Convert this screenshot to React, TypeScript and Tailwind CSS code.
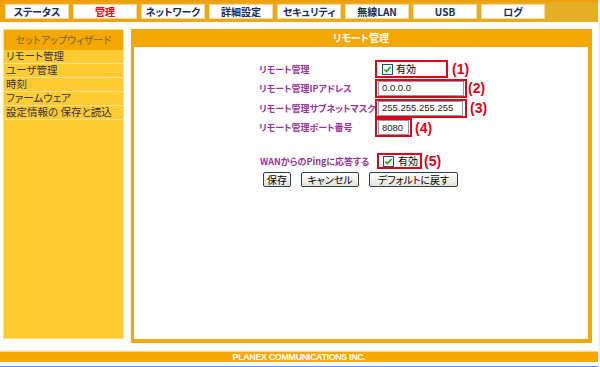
import React from "react";

const jp = {
  fontFamily: '"Noto Sans CJK JP", "Noto Sans", sans-serif',
  fontFeatureSettings: '"palt"',
} as React.CSSProperties;

const tabs = ["ステータス", "管理", "ネットワーク", "詳細設定", "セキュリティ", "無線LAN", "USB", "ログ"];
const side = ["リモート管理", "ユーザ管理", "時刻", "ファームウェア", "設定情報の 保存と読込"];

function Check() {
  return (
    <svg width="11" height="11" viewBox="0 0 11 11" className="shrink-0">
      <rect x="0.5" y="0.5" width="10" height="10" fill="#f4f4ee" stroke="#1c5180" />
      <path d="M2.5 5.5 L4.5 7.5 L8.5 3" fill="none" stroke="#21a121" strokeWidth="1.6" />
    </svg>
  );
}

function Num({ n, ml }: { n: number; ml: string }) {
  return (
    <span
      className={`${ml} text-[14px] font-bold text-[#e0001a] leading-none`}
      style={{ fontFamily: '"Liberation Sans", Arial, sans-serif' }}
    >
      ({n})
    </span>
  );
}

function Input({ w, v }: { w: string; v: string }) {
  return (
    <div
      className={`${w} h-[15px] border border-[#7f9db9] bg-white flex items-center px-[3px] text-[9.5px] text-[#222] leading-none`}
      style={{ fontFamily: '"Liberation Sans", Arial, sans-serif' }}
    >
      {v}
    </div>
  );
}

function Btn({ w, t }: { w: string; t: string }) {
  return (
    <div
      className={`${w} h-[15px] border border-[#2a3f5f] rounded-[2px] bg-gradient-to-b from-white to-[#e6e3d6] flex items-center justify-center text-[10px] text-black leading-none`}
      style={jp}
    >
      {t}
    </div>
  );
}

const lab = "text-[9px] font-bold text-[#993399] leading-none whitespace-nowrap";

export default function App() {
  return (
    <div className="w-[600px] h-[367px] bg-white overflow-hidden flex">
      <div className="w-[598px] flex flex-col">
        <div className="h-[22px] bg-gradient-to-r from-[#f0a30c] via-[#e8ab1c] to-[#e4af28] border-t-2 border-[#ee9f0a] pl-[5px] pt-[2px] flex gap-[4px]">
          {tabs.map((t, i) => (
            <div
              key={t}
              className={`w-[64px] h-[15px] bg-white border border-[#f3d9a0] flex items-center justify-center text-[10px] font-bold leading-none ${
                i === 1 ? "text-[#ff0000]" : "text-[#1a2a5a]"
              }`}
              style={jp}
            >
              {t}
            </div>
          ))}
        </div>
        <div className="flex mt-[7px] pl-[3px]">
          <div className="w-[121px] h-[310px] bg-[#ffcb33] border border-[#ffe07a] flex flex-col">
            <div className="h-[20px] bg-[#f5a800] flex items-center justify-center text-[10px] text-[#7a6448] leading-none" style={jp}>
              セットアップウィザード
            </div>
            {side.map((s) => (
              <div
                key={s}
                className="h-[14px] border-b border-[#ffe28a] flex items-center pl-[2px] text-[10.5px] text-[#333344] leading-none"
                style={jp}
              >
                {s}
              </div>
            ))}
          </div>
          <div className="ml-[7px] w-[461px] h-[314px] bg-[#f5a800] pl-[3px] pr-[4px] pb-[4px] flex flex-col">
            <div className="h-[18px] flex items-center justify-center text-[10px] font-bold text-white leading-none" style={jp}>
              リモート管理
            </div>
            <div className="flex-1 bg-white pl-[125px] pt-[13px]">
              <div className="flex items-center h-[18px]">
                <div className={`w-[116px] ${lab}`} style={jp}>リモート管理</div>
                <div className="w-[73px] h-[18px] border-2 border-[#e0001a] flex items-center pl-[5px] gap-[3px]">
                  <Check />
                  <span className="text-[10px] text-black leading-none" style={jp}>有効</span>
                </div>
                <Num n={1} ml="ml-[4px]" />
              </div>
              <div className="flex items-center h-[20px]">
                <div className={`w-[116px] ${lab}`} style={jp}>リモート管理IPアドレス</div>
                <div className="w-[92px] h-[19px] border-2 border-[#e0001a] flex items-center px-[1px]">
                  <Input w="w-[86px]" v="0.0.0.0" />
                </div>
                <Num n={2} ml="ml-[1px]" />
              </div>
              <div className="flex items-center h-[20px]">
                <div className={`w-[116px] ${lab}`} style={jp}>リモート管理サブネットマスク</div>
                <div className="w-[92px] h-[19px] border-2 border-[#e0001a] flex items-center px-[1px]">
                  <Input w="w-[85px]" v="255.255.255.255" />
                </div>
                <Num n={3} ml="ml-[3px]" />
              </div>
              <div className="flex items-center h-[19px]">
                <div className={`w-[116px] ${lab}`} style={jp}>リモート管理ポート番号</div>
                <div className="w-[37px] h-[19px] border-2 border-[#e0001a] flex items-center px-[1px]">
                  <Input w="w-[31px]" v="8080" />
                </div>
                <Num n={4} ml="ml-[3px]" />
              </div>
              <div className="flex items-center h-[16px] mt-[16px]">
                <div className={`w-[118px] pl-[1px] ${lab}`} style={jp}>WANからのPingに応答する</div>
                <div className="w-[45px] h-[16px] border-2 border-[#e0001a] flex items-center pl-[4px] gap-[4px]">
                  <Check />
                  <span className="text-[10px] text-black leading-none" style={jp}>有効</span>
                </div>
                <Num n={5} ml="ml-[2px]" />
              </div>
              <div className="flex gap-[10px] mt-[3px] pl-[4px]">
                <Btn w="w-[28px]" t="保存" />
                <Btn w="w-[58px]" t="キャンセル" />
                <Btn w="w-[89px]" t="デフォルトに戻す" />
              </div>
            </div>
          </div>
        </div>
        <div className="mt-[8px] h-[11px] bg-[#f5a800] border-t border-[#fbd08a] flex items-center justify-center text-[9px] font-bold text-white leading-none tracking-[-0.4px]" style={{ fontFamily: '"Liberation Sans", Arial, sans-serif' }}>
          PLANEX COMMUNICATIONS INC.
        </div>
        <div className="mt-[4px] h-[1px] bg-[#5a8be8]" />
      </div>
      <div className="w-[2px] bg-[#f2f2f2]" />
    </div>
  );
}
